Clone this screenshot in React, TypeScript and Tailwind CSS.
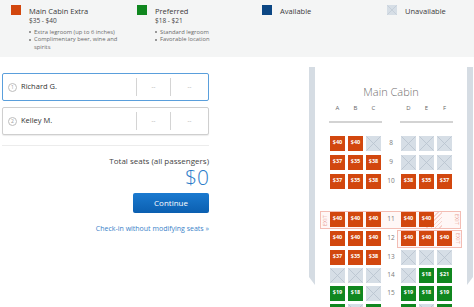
import React from "react";

// ─── Legend data ──────────────────────────────────────────────────────────────
const legend = [
  {
    title: "Main Cabin Extra",
    price: "$35 - $40",
    swatch: "bg-[#d2470e]",
    bullets: ["Extra legroom (up to 6 inches)", "Complimentary beer, wine and spirits"],
    col: "w-[126px]",
  },
  {
    title: "Preferred",
    price: "$18 - $21",
    swatch: "bg-[#10871f]",
    bullets: ["Standard legroom", "Favorable location"],
    col: "w-[125px]",
  },
  { title: "Available", swatch: "bg-[#0c4784]", bullets: [], col: "w-[125px]" },
  { title: "Unavailable", swatch: "bg-[#d6dee6]", bullets: [], col: "flex-1", cross: true },
];

// ─── Seat rows: o = Main Cabin Extra, g = Preferred, x = taken, h = no seat ───
type Row = { n: number; left: string[]; right: string[]; exit?: "both" | "right" };

const rows: Row[] = [
  { n: 8, left: ["o40", "o40", "x"], right: ["x", "x", "x"] },
  { n: 9, left: ["o37", "o35", "o38"], right: ["x", "x", "x"] },
  { n: 10, left: ["o37", "o35", "o38"], right: ["o38", "o35", "o37"] },
  { n: 11, left: ["o40", "o40", "o40"], right: ["o40", "o40", "h"], exit: "both" },
  { n: 12, left: ["o40", "o40", "o40"], right: ["o40", "o40", "o40"], exit: "right" },
  { n: 13, left: ["o37", "o35", "o38"], right: ["x", "x", "x"] },
  { n: 14, left: ["x", "x", "x"], right: ["x", "g18", "g21"] },
  { n: 15, left: ["g19", "g18", "x"], right: ["g19", "g18", "g19"] },
  { n: 16, left: ["g19", "x", "g18"], right: ["g19", "x", "g19"] },
];

function Cross({ size }: { size: number }) {
  return (
    <svg width={size} height={size} viewBox="0 0 15 15" className="block">
      <path d="M0.5 0.5L14.5 14.5M14.5 0.5L0.5 14.5" stroke="#b7c3ce" strokeWidth="0.8" />
    </svg>
  );
}

function Seat({ code }: { code: string }) {
  if (code === "h") return <div className="w-[15px] h-[15px]" />;
  if (code === "x") {
    return (
      <div className="w-[15px] h-[15px] bg-[#d6dee6]">
        <Cross size={15} />
      </div>
    );
  }
  const bg = code[0] === "o" ? "bg-[#d2470e]" : "bg-[#10871f]";
  return (
    <div
      className={`w-[15px] h-[15px] ${bg} flex items-center justify-center text-[5.5px] font-bold text-white leading-none`}
    >
      ${code.slice(1)}
    </div>
  );
}

function ExitLabel({ side }: { side: "l" | "r" }) {
  return (
    <span
      className={`absolute top-0 bottom-0 flex items-center justify-center w-[8px] text-[5px] leading-none tracking-[0.3px] text-[#e79b8f] [writing-mode:vertical-rl] ${
        side === "l" ? "left-0 rotate-180" : "right-0"
      }`}
    >
      EXIT
    </span>
  );
}

function SeatRow({ row }: { row: Row }) {
  const gap =
    row.n === 8 ? "" : row.n === 11 ? "mt-[23px]" : row.n > 13 ? "mt-[3px]" : "mt-[4px]";
  return (
    <div className={`relative flex ${gap}`}>
      {row.exit === "both" && (
        <div className="absolute left-[-10px] right-[-9px] top-[-1px] bottom-[-2px] border border-[#f3bdb4] bg-[#fff7f6]">
          <ExitLabel side="l" />
          <ExitLabel side="r" />
          <div className="absolute left-[104px] top-0 bottom-0 w-[17px] bg-[repeating-linear-gradient(135deg,#f7d3cd_0,#f7d3cd_1px,transparent_1px,transparent_3px)]" />
        </div>
      )}
      {row.exit === "right" && (
        <div className="absolute left-[67px] right-[-10px] top-[-1px] bottom-[-2px] border border-[#f3bdb4] bg-[#fff7f6]">
          <ExitLabel side="r" />
        </div>
      )}
      <div className="relative flex gap-[3px]">
        {row.left.map((c, i) => (
          <Seat key={i} code={c} />
        ))}
      </div>
      <div className="relative w-[20px] flex items-center justify-center text-[6.5px] text-[#7a7a7a]">
        {row.n}
      </div>
      <div className="relative flex gap-[3px]">
        {row.right.map((c, i) => (
          <Seat key={i} code={c} />
        ))}
      </div>
    </div>
  );
}

function Passenger({ num, name, active }: { num: number; name: string; active?: boolean }) {
  return (
    <div
      className={`flex h-[28px] w-[207px] items-stretch rounded-[2px] border bg-white ${
        active ? "border-[#5a9fdc]" : "border-[#cfcfcf] shadow-[0_1px_1px_rgba(0,0,0,0.08)]"
      }`}
    >
      <div className="flex flex-1 items-center gap-[4px] pl-[5px]">
        <span className="flex h-[9px] w-[9px] items-center justify-center rounded-full border border-[#bdbdbd] text-[5px] leading-none text-[#9a9a9a]">
          {num}
        </span>
        <span className="text-[7.5px] text-[#333]">{name}</span>
      </div>
      <div className="my-[4px] w-px bg-[#d4d4d4]" />
      <div className="flex w-[33px] items-center justify-center text-[6px] text-[#999]">--</div>
      <div className="my-[4px] w-px bg-[#d4d4d4]" />
      <div className="flex w-[37px] items-center justify-center text-[6px] text-[#999]">--</div>
    </div>
  );
}

export default function App() {
  return (
    <div className="h-[307px] w-[474px] overflow-hidden bg-white font-['Open_Sans',sans-serif]">
      {/* ── Legend ── */}
      <div className="flex h-[57px] bg-[#f4f5f5] pl-[11px] pt-[5px]">
        {legend.map((l) => (
          <div key={l.title} className={`flex gap-[8px] ${l.col}`}>
            <div className={`h-[10px] w-[10px] shrink-0 ${l.swatch}`}>
              {l.cross && <Cross size={10} />}
            </div>
            <div className="pt-[0.5px]">
              <p className="text-[7.5px] leading-[10px] text-[#3a3a3a]">{l.title}</p>
              {l.price && <p className="text-[6.5px] leading-[10px] text-[#444]">{l.price}</p>}
              {l.bullets.length > 0 && (
                <ul className="mt-[3px] w-[96px]">
                  {l.bullets.map((b) => (
                    <li key={b} className="flex gap-[3px] text-[5.8px] leading-[7.5px] text-[#6a6a6a]">
                      <span className="mt-[2.5px] h-[2px] w-[2px] shrink-0 bg-[#999]" />
                      <span>{b}</span>
                    </li>
                  ))}
                </ul>
              )}
            </div>
          </div>
        ))}
      </div>

      <div className="flex">
        {/* ── Passengers & total ── */}
        <div className="w-[309px] pl-[2px] pt-[16px]">
          <div className="flex flex-col gap-[6px]">
            <Passenger num={1} name="Richard G." active />
            <Passenger num={2} name="Kelley M." />
          </div>
          <div className="mt-[10px] h-px w-[207px] bg-[#ececec]" />
          <div className="flex w-[207px] flex-col items-end">
            <p className="mt-[10px] text-[8px] leading-[10px] text-[#444]">Total seats (all passengers)</p>
            <p className="mt-[1px] text-[21px] font-light leading-[21px] text-[#2a7bc9]">$0</p>
            <button className="mt-[5px] h-[20px] w-[76px] rounded-[2px] bg-[linear-gradient(#1b7ad0,#0b5fb0)] text-[8px] text-white">
              Continue
            </button>
            <a className="mt-[11px] text-[7px] leading-[9px] text-[#3a82c9]">Check-in without modifying seats »</a>
          </div>
        </div>

        {/* ── Seat map ── */}
        <div className="mt-[10px] flex">
          <div className="h-[218px] w-[6px] bg-[#d5dce3] [clip-path:polygon(0_0,100%_0,100%_100%,0_calc(100%-8px))]" />
          <div className="flex w-[152px] flex-col items-center">
            <p className="mt-[18px] text-[11px] font-light leading-[14px] text-[#6f6f6f]">Main Cabin</p>
            <div className="mt-[6px] flex text-[6px] leading-[7px] text-[#666]">
              <div className="flex gap-[3px]">
                {["A", "B", "C"].map((c) => (
                  <span key={c} className="w-[15px] text-center">{c}</span>
                ))}
              </div>
              <div className="w-[20px]" />
              <div className="flex gap-[3px]">
                {["D", "E", "F"].map((c) => (
                  <span key={c} className="w-[15px] text-center">{c}</span>
                ))}
              </div>
            </div>
            <div className="mt-[9px] flex gap-[18px]">
              <div className="h-[1.5px] w-[53px] bg-[#d3d3d3]" />
              <div className="h-[1.5px] w-[53px] bg-[#d3d3d3]" />
            </div>
            <div className="mt-[13px] flex flex-col">
              {rows.map((r) => (
                <SeatRow key={r.n} row={r} />
              ))}
            </div>
          </div>
          <div className="h-[218px] w-[6px] bg-[#d5dce3] [clip-path:polygon(0_0,100%_0,100%_calc(100%-8px),0_100%)]" />
        </div>
      </div>
    </div>
  );
}
